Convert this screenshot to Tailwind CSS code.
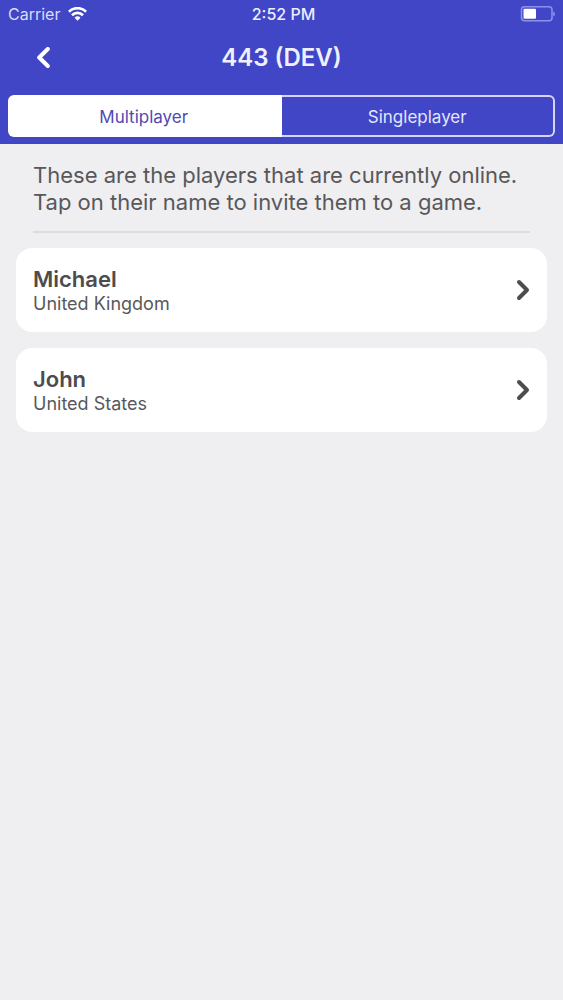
<!DOCTYPE html>
<html lang="en">
<head>
<meta charset="utf-8">
<meta name="viewport" content="width=device-width, initial-scale=1">
<title>443 (DEV)</title>
<script src="https://cdn.jsdelivr.net/npm/@tailwindcss/browser@4"></script>
</head>
<body class="min-h-screen bg-[#efeef1] font-['Inter',sans-serif] text-[#58585a]">
<header class="bg-[#4046c6] px-2 pb-[7px] text-white">
  <div class="grid h-7 grid-cols-3 items-center">
    <div class="flex items-center gap-2">
      <span class="text-base text-[#d9dcfb]">Carrier</span>
      <svg class="h-[14px] w-[19px]" viewBox="0 0 19 14" fill="none" stroke="#fff" stroke-width="2.7" aria-label="Wi-Fi">
        <path d="M.9 4.700a12.300 12.300 0 0 1 17.200 0"/>
        <path d="M4 8.200a7.900 7.900 0 0 1 11 0"/>
        <path d="M9.500 13.800 6.500 10.800a4.300 4.300 0 0 1 6 0z" fill="#fff" stroke="none"/>
      </svg>
    </div>
    <span class="justify-self-center pl-1 text-base font-medium text-[#eceeff]">2:52 PM</span>
    <svg class="h-4 w-9 justify-self-end" viewBox="0 0 36 16" aria-label="Battery">
      <rect x="2.500" y=".8" width="30.500" height="14" rx="3" fill="none" stroke="#8d91ee" stroke-width="1.5"/>
      <rect x="4.500" y="2.800" width="12.500" height="10" rx="1" fill="#fff"/>
      <path d="M34.300 5.500c2 .8 2 4.200 0 5z" fill="#9a9df0"/>
    </svg>
  </div>
  <div class="grid h-[67px] grid-cols-[1fr_auto_1fr] items-center pb-2">
    <button type="button" aria-label="Back" class="ml-7 w-[14px]">
      <svg class="h-[22px] w-[14px]" viewBox="0 0 14 22" fill="none" stroke="#fff" stroke-width="4" stroke-linecap="round" stroke-linejoin="round"><path d="M11.800 2 3.200 10.500l8.600 8.500"/></svg>
    </button>
    <h1 class="text-2xl font-semibold text-[#eff0ff]">443 (DEV)</h1>
  </div>
  <div class="grid h-[42px] grid-cols-2 text-[17px]">
    <button type="button" aria-pressed="true" class="rounded-l-md bg-white pt-1 pr-[2px] text-[#5149b4]">Multiplayer</button>
    <button type="button" aria-pressed="false" class="rounded-r-md border-2 border-l-0 border-[#d3d6fa] pt-1 text-[#e3e5fd]">Singleplayer</button>
  </div>
</header>
<main class="px-4">
  <p class="mx-[17px] border-b-2 border-[#dcdbdf] pt-[18px] pb-[15px] text-[22px] leading-[27px]">These are the players that are currently online.<br>Tap on their name to invite them to a game.</p>
  <ul class="mt-[15px] flex flex-col gap-4">
    <li>
      <button type="button" class="flex h-[84px] w-full items-center justify-between rounded-2xl bg-white px-[17px] text-left">
        <span class="flex flex-col pt-[2px]"><span class="text-[22px] leading-[26px] font-semibold text-[#4c4c4e]">Michael</span><span class="text-lg leading-6">United Kingdom</span></span>
        <svg class="h-[22px] w-[14px]" viewBox="0 0 14 22" fill="none" stroke="#4d4d4f" stroke-width="4" stroke-linecap="round" stroke-linejoin="round"><path d="M3 3 11 11l-8 8"/></svg>
      </button>
    </li>
    <li>
      <button type="button" class="flex h-[84px] w-full items-center justify-between rounded-2xl bg-white px-[17px] text-left">
        <span class="flex flex-col pt-[2px]"><span class="text-[22px] leading-[26px] font-semibold text-[#4c4c4e]">John</span><span class="text-lg leading-6">United States</span></span>
        <svg class="h-[22px] w-[14px]" viewBox="0 0 14 22" fill="none" stroke="#4d4d4f" stroke-width="4" stroke-linecap="round" stroke-linejoin="round"><path d="M3 3 11 11l-8 8"/></svg>
      </button>
    </li>
  </ul>
</main>
</body>
</html>
